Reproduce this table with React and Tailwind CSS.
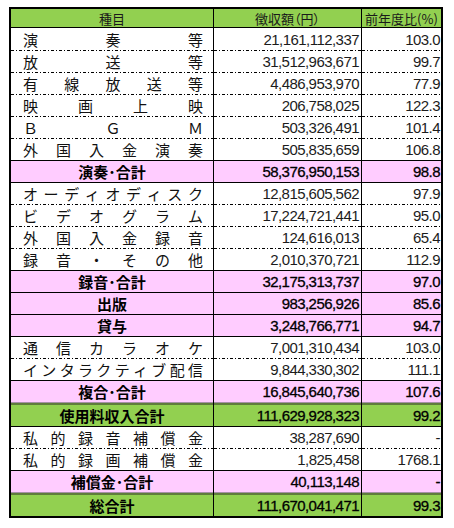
import React from "react";

const rows = [
  { t: "n", l: "演奏等", v: "21,161,112,337", p: "103.0" },
  { t: "n", l: "放送等", v: "31,512,963,671", p: "99.7" },
  { t: "n", l: "有線放送等", v: "4,486,953,970", p: "77.9" },
  { t: "n", l: "映画上映", v: "206,758,025", p: "122.3" },
  { t: "n", l: "ＢＧＭ", v: "503,326,491", p: "101.4" },
  { t: "n", l: "外国入金演奏", v: "505,835,659", p: "106.8" },
  { t: "s", l: "演奏･合計", v: "58,376,950,153", p: "98.8" },
  { t: "n", l: "オーディオディスク", v: "12,815,605,562", p: "97.9" },
  { t: "n", l: "ビデオグラム", v: "17,224,721,441", p: "95.0" },
  { t: "n", l: "外国入金録音", v: "124,616,013", p: "65.4" },
  { t: "n", l: "録音・その他", v: "2,010,370,721", p: "112.9" },
  { t: "s", l: "録音･合計", v: "32,175,313,737", p: "97.0" },
  { t: "s", l: "出版", v: "983,256,926", p: "85.6" },
  { t: "s", l: "貸与", v: "3,248,766,771", p: "94.7" },
  { t: "n", l: "通信カラオケ", v: "7,001,310,434", p: "103.0" },
  { t: "n", l: "インタラクティブ配信", v: "9,844,330,302", p: "111.1" },
  { t: "s", l: "複合･合計", v: "16,845,640,736", p: "107.6" },
  { t: "g", l: "使用料収入合計", v: "111,629,928,323", p: "99.2" },
  { t: "n", l: "私的録音補償金", v: "38,287,690", p: "-" },
  { t: "n", l: "私的録画補償金", v: "1,825,458", p: "1768.1" },
  { t: "s", l: "補償金･合計", v: "40,113,148", p: "-" },
  { t: "g", l: "総合計", v: "111,670,041,471", p: "99.3" },
];

const jp = "font-['Noto_Sans_CJK_JP',sans-serif]";
const num = "font-['Liberation_Sans',sans-serif] text-[15px] tracking-[-0.55px] leading-none";

function LineSeg({ kind, last }) {
  const edge = last ? "" : "border-r border-black";
  if (kind === "dot") {
    return (
      <div className={`h-px ${edge} bg-[repeating-linear-gradient(90deg,#000_0px,#000_3px,transparent_3px,transparent_5px,#000_5px,#000_6px,transparent_6px,transparent_8px)]`} />
    );
  }
  if (kind === "double") {
    return (
      <div className={`flex flex-col ${edge}`}>
        <div className="h-px bg-[#a491a4]" />
        <div className="h-[2px] bg-[#5f7d3b]" />
      </div>
    );
  }
  return <div className={`h-px ${edge} bg-black`} />;
}

function Line({ kind }) {
  return (
    <div className="grid grid-cols-[203px_148px_79px]">
      <LineSeg kind={kind} />
      <LineSeg kind={kind} />
      <LineSeg kind={kind} last />
    </div>
  );
}

function Row({ r, first }) {
  const bg = r.t === "g" ? "bg-[#92d050]" : r.t === "s" ? "bg-[#ffccff]" : "bg-white";
  const h = first ? "h-[22px]" : "h-[21px]";
  const numBold = r.t !== "n" ? "[-webkit-text-stroke:0.3px_#000] text-black" : "text-[#1c1c1c]";
  return (
    <div className={`grid grid-cols-[203px_148px_79px] ${h} ${bg}`}>
      <div className="border-r border-black flex items-center">
        {r.t === "n" ? (
          <div className={`flex w-full justify-between pl-[12px] pr-[10px] text-[15px] leading-none text-[#111] ${jp}`}>
            {Array.from(r.l).map((c, i) => (
              <span key={i}>{c}</span>
            ))}
          </div>
        ) : (
          <div className={`w-full text-center text-[15px] leading-none text-black font-bold ${jp}`}>{r.l}</div>
        )}
      </div>
      <div className={`border-r border-black flex items-center justify-end pr-[2px] ${num} ${numBold}`}>
        {r.v}
      </div>
      <div className={`flex items-center justify-end pr-[1px] ${num} ${numBold}`}>
        {r.p}
      </div>
    </div>
  );
}

export default function App() {
  return (
    <div className="w-[454px] h-[528px] bg-white pt-[7px] pl-[9px]">
      <div className="w-[434px] border-2 border-black">
        <div className={`grid grid-cols-[203px_148px_79px] h-[18px] bg-[#92d050] text-[13px] leading-none text-[#1a1a1a] ${jp} [font-feature-settings:'palt']`}>
          <div className="border-r border-black flex items-center justify-center">種目</div>
          <div className="border-r border-black flex items-center justify-center">徴収額（円）</div>
          <div className="flex items-center justify-center whitespace-nowrap">前年度比(%)</div>
        </div>
        <Line kind="solid" />
        {rows.map((r, i) => {
          const next = rows[i + 1];
          let kind = null;
          if (next) {
            if (next.t === "g") kind = "double";
            else if (r.t === "n" && next.t === "n") kind = "dot";
            else kind = "solid";
          }
          return (
            <React.Fragment key={i}>
              <Row r={r} first={i === 0} />
              {kind && <Line kind={kind} />}
            </React.Fragment>
          );
        })}
      </div>
    </div>
  );
}
